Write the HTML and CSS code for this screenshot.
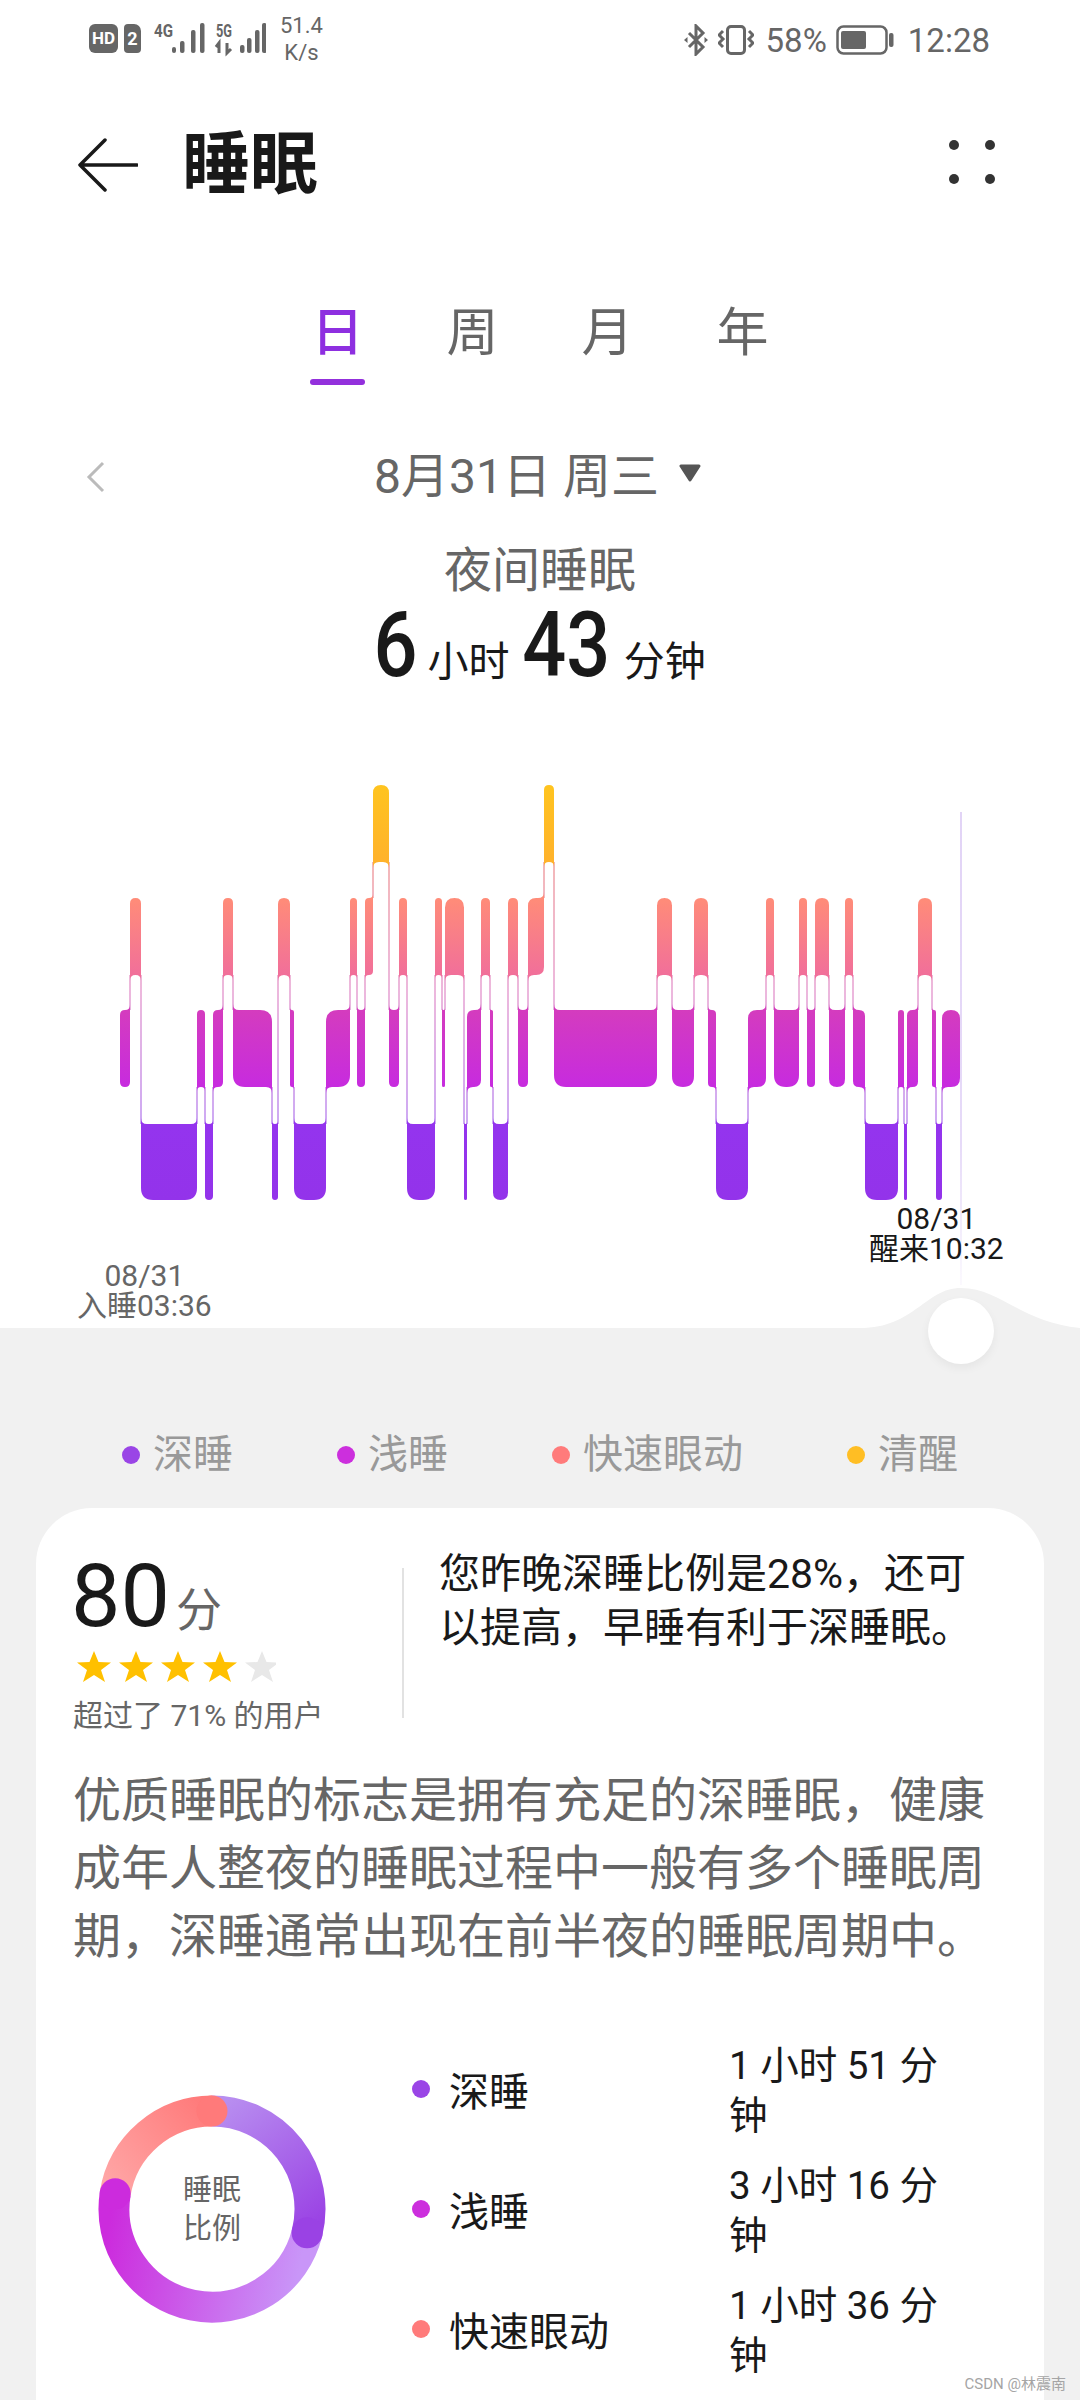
FILE: index.html
```html
<!DOCTYPE html>
<html>
    <head>
        <title>睡眠</title>
        <meta charset="UTF-8">
        <link rel="stylesheet" href="styles.css">
    </head>
    <body>
        <div class="status">
            <div class="status-left">
                <div class="hd">HD</div>
                <div class="sim">2</div>
                <svg class="signal" width="112" height="40" viewBox="154 20 112 40">
                    <text x="154" y="38" class="net" textLength="19" lengthAdjust="spacingAndGlyphs">4G</text>
                    <rect x="172" y="48" width="4" height="6" rx="2"/>
                    <rect x="180" y="42" width="4.500" height="12" rx="2"/>
                    <rect x="191" y="31" width="4.500" height="23" rx="2"/>
                    <rect x="200" y="24" width="4.500" height="30" rx="2"/>
                    <text x="216" y="38" class="net" textLength="16" lengthAdjust="spacingAndGlyphs">5G</text>
                    <path d="M219 54V44l-3 4M227 44v10l4-4" class="arrows"/>
                    <rect x="240" y="46" width="4.500" height="8" rx="2"/>
                    <rect x="247" y="39" width="4.500" height="15" rx="2"/>
                    <rect x="255" y="31" width="4.500" height="23" rx="2"/>
                    <rect x="262" y="24" width="4.500" height="30" rx="2"/>
                </svg>
                <div class="speed">51.4<br>K/s</div>
            </div>
            <div class="status-right">
                <svg class="bt" width="24" height="32" viewBox="0 0 24 32">
                    <path d="M5 9l14 14-7 7V2l7 7L5 23" fill="none" stroke="#666" stroke-width="3"/>
                    <path d="M0 16l3.500-3v6zM24 16l-3.500-3v6z" fill="#666"/>
                </svg>
                <svg class="vib" width="36" height="30" viewBox="0 0 36 30">
                    <rect x="9.500" y="1.500" width="17" height="27" rx="3.500" fill="none" stroke="#666" stroke-width="3"/>
                    <path d="M5 6L1 10l4 4-4 4 4 4M31 6l4 4-4 4 4 4-4 4" fill="none" stroke="#666" stroke-width="3"/>
                </svg>
                <span class="pct">58%</span>
                <svg class="batt" width="58" height="30" viewBox="0 0 58 30">
                    <rect x="1.500" y="1.500" width="49" height="27" rx="6" fill="none" stroke="#666" stroke-width="2.500"/>
                    <rect x="5" y="6" width="25" height="18" rx="2" fill="#666"/>
                    <rect x="53" y="8" width="4.500" height="14" rx="2" fill="#666"/>
                </svg>
                <span class="time">12:28</span>
            </div>
        </div>

        <div class="header">
            <svg class="back" width="60" height="54" viewBox="0 0 60 54">
                <path d="M27 2L2 27l25 25M2 27h57" fill="none" stroke="#191919" stroke-width="3.500" stroke-linecap="round" stroke-linejoin="round"/>
            </svg>
            <div class="title">睡眠</div>
            <div class="more">
                <i></i><i></i><i></i><i></i>
            </div>
        </div>

        <div class="tabs">
            <div class="tab active">日</div>
            <div class="tab">周</div>
            <div class="tab">月</div>
            <div class="tab">年</div>
        </div>

        <div class="date-row">
            <svg width="20" height="32" viewBox="0 0 20 32">
                <path d="M17 2L3 16l14 14" fill="none" stroke="#bbb" stroke-width="3"/>
            </svg>
            <div class="date"><span>8月31日 周三</span><svg class="caret" width="22" height="18" viewBox="0 0 22 18">
                    <path d="M2 2h18l-9 14z" fill="#555" stroke="#555" stroke-width="3" stroke-linejoin="round"/>
                </svg></div>
        </div>

        <div class="sleep-title">夜间睡眠</div>
        <div class="sleep-total">
            <span class="big">6</span><span>小时</span><span class="big">43</span><span>分钟</span>
        </div>

        <div class="chart">
            <svg id="hypnogram" width="1080" height="637" viewBox="0 691 1080 637">
                <defs>
                    <linearGradient id="g0" gradientUnits="userSpaceOnUse" x1="0" y1="785" x2="0" y2="862">
                        <stop offset="0" stop-color="#ffc41f"/><stop offset="1" stop-color="#ffb22b"/>
                    </linearGradient>
                    <linearGradient id="g1" gradientUnits="userSpaceOnUse" x1="0" y1="898" x2="0" y2="975">
                        <stop offset="0" stop-color="#ff8c78"/><stop offset="1" stop-color="#f16f9a"/>
                    </linearGradient>
                    <linearGradient id="g2" gradientUnits="userSpaceOnUse" x1="0" y1="1010" x2="0" y2="1087">
                        <stop offset="0" stop-color="#d43cbe"/><stop offset="1" stop-color="#c72bdf"/>
                    </linearGradient>
                    <linearGradient id="g3" gradientUnits="userSpaceOnUse" x1="0" y1="1124" x2="0" y2="1200">
                        <stop offset="0" stop-color="#9434ee"/><stop offset="1" stop-color="#9333ea"/>
                    </linearGradient>
                    <linearGradient id="link" gradientUnits="userSpaceOnUse" x1="0" y1="860" x2="0" y2="1126">
                        <stop offset="0" stop-color="#f0a0a0"/><stop offset="0.5" stop-color="#e6a0d2"/><stop offset="1" stop-color="#bc8cf0"/>
                    </linearGradient>
                    <linearGradient id="guide" gradientUnits="userSpaceOnUse" x1="0" y1="812" x2="0" y2="1285">
                        <stop offset="0" stop-color="#e2d4f6"/><stop offset="0.7" stop-color="#e6daf8"/><stop offset="1" stop-color="#fbf9fe"/>
                    </linearGradient>
                </defs>
                <rect x="960" y="812" width="2" height="473" fill="url(#guide)"/>
                <g id="segments"></g>
                <path d="M860 1328C915 1328 925 1288 961 1288C1000 1288 1020 1322 1080 1328Z" fill="#f1f1f1"/>
            </svg>
            <div class="stamp stamp-end">08/31<br>醒来10:32</div>
            <div class="stamp stamp-start">08/31<br>入睡03:36</div>
            <div class="knob"></div>
        </div>

        <div class="lower">
            <div class="legend">
                <div class="legend-item"><i class="dot deep"></i>深睡</div>
                <div class="legend-item"><i class="dot light"></i>浅睡</div>
                <div class="legend-item"><i class="dot rem"></i>快速眼动</div>
                <div class="legend-item"><i class="dot awake"></i>清醒</div>
            </div>

            <div class="card">
                <div class="score-row">
                    <div class="score-col">
                        <div class="score"><span class="score-num">80</span><span class="score-unit">分</span></div>
                        <svg class="stars" width="200" height="31" viewBox="0 0 200 31">
                            <polygon id="star" fill="#ffc000" points="18,0 22.500,11 35,11.500 25,19 29,31 18,24 7,31 11,19 1,11.500 13.500,11"/>
                            <use href="#star" x="42"/>
                            <use href="#star" x="84"/>
                            <use href="#star" x="126"/>
                            <polygon transform="translate(168)" fill="#e8e8e8" points="18,0 22.500,11 35,11.500 25,19 29,31 18,24 7,31 11,19 1,11.500 13.500,11"/>
                        </svg>
                        <div class="beat">超过了 71% 的用户</div>
                    </div>
                    <div class="divider"></div>
                    <div class="tip">您昨晚深睡比例是28%，还可以提高，早睡有利于深睡眠。</div>
                </div>

                <p class="desc">优质睡眠的标志是拥有充足的深睡眠，健康成年人整夜的睡眠过程中一般有多个睡眠周期，深睡通常出现在前半夜的睡眠周期中。</p>

                <div class="ratio">
                    <div class="donut">
                        <svg width="230" height="230" viewBox="0 0 230 230">
                            <defs>
                                <linearGradient id="arcDeep" gradientUnits="userSpaceOnUse" x1="115" y1="17" x2="210" y2="139">
                                    <stop offset="0" stop-color="#b88ef0"/><stop offset="1" stop-color="#9a42e4"/>
                                </linearGradient>
                                <linearGradient id="arcLight" gradientUnits="userSpaceOnUse" x1="210" y1="139" x2="18" y2="100">
                                    <stop offset="0" stop-color="#c996f8"/><stop offset="1" stop-color="#cc2bdd"/>
                                </linearGradient>
                                <linearGradient id="arcRem" gradientUnits="userSpaceOnUse" x1="18" y1="100" x2="115" y2="17">
                                    <stop offset="0" stop-color="#ffa6a6"/><stop offset="1" stop-color="#ff7a7a"/>
                                </linearGradient>
                            </defs>
                            <path d="M115 17A98 98 0 0 1 210.100 138.700" fill="none" stroke="url(#arcDeep)" stroke-width="31"/>
                            <path d="M210.100 138.700A98 98 0 0 1 18.200 99.700" fill="none" stroke="url(#arcLight)" stroke-width="31"/>
                            <path d="M18.200 99.700A98 98 0 0 1 115 17" fill="none" stroke="url(#arcRem)" stroke-width="31"/>
                            <circle cx="210.100" cy="138.700" r="15.500" fill="#9a42e4"/>
                            <circle cx="18.200" cy="99.700" r="15.500" fill="#cc2bdd"/>
                            <circle cx="115" cy="17" r="15.500" fill="#ff7a7a"/>
                        </svg>
                        <div class="donut-label">睡眠<br>比例</div>
                    </div>
                    <div class="ratio-list">
                        <div class="ratio-row">
                            <i class="dot deep"></i><span class="ratio-name">深睡</span><span class="ratio-val">1 小时 51 分钟</span>
                        </div>
                        <div class="ratio-row">
                            <i class="dot light"></i><span class="ratio-name">浅睡</span><span class="ratio-val">3 小时 16 分钟</span>
                        </div>
                        <div class="ratio-row">
                            <i class="dot rem"></i><span class="ratio-name">快速眼动</span><span class="ratio-val">1 小时 36 分钟</span>
                        </div>
                    </div>
                </div>
            </div>
        </div>

        <div class="watermark">CSDN @林震南</div>
        <script src="chart.js"></script>
    </body>
</html>
```

FILE: styles.css
```css
html, body {
    margin: 0;
    padding: 0;
}
body {
    position: relative;
    width: 1080px;
    height: 2400px;
    overflow: hidden;
    background-color: #fff;
    color: #191919;
    font-family: Roboto, "Noto Sans CJK SC", sans-serif;
}
svg {
    display: block;
}

/* status bar */
.status {
    height: 78px;
    display: flex;
    justify-content: space-between;
    align-items: center;
    padding: 2px 90px 0 89px;
    box-sizing: border-box;
    color: #666;
}
.status-left, .status-right {
    display: flex;
    align-items: center;
}
.hd {
    width: 29px;
    height: 29px;
    margin-top: -3px;
    border-radius: 6px;
    background: #666;
    color: #fff;
    font-size: 17px;
    font-weight: 700;
    line-height: 29px;
    text-align: center;
}
.sim {
    width: 17px;
    height: 29px;
    margin: -3px 0 0 6px;
    border-radius: 4px 7px 4px 4px;
    background: #666;
    color: #fff;
    font-size: 18px;
    font-weight: 700;
    line-height: 29px;
    text-align: center;
}
.signal {
    margin: -2px 0 0 13px;
}
.signal rect {
    fill: #666;
}
.net {
    fill: #666;
    font-size: 18px;
    font-weight: 700;
}
.arrows {
    fill: none;
    stroke: #666;
    stroke-width: 3;
}
.speed {
    margin: -2px 0 0 14px;
    font-size: 22px;
    line-height: 27px;
    text-align: center;
}
.bt {
    margin-right: 10px;
}
.vib {
    margin-right: 12px;
}
.pct, .time {
    font-size: 33px;
}
.batt {
    margin-left: 9px;
    margin-right: 14px;
}

/* title bar */
.header {
    height: 174px;
    display: flex;
    align-items: center;
    padding: 0 85px 0 78px;
}
.title {
    flex: 1;
    margin-left: 44px;
    font-size: 68px;
    font-weight: 700;
    line-height: 80px;
}
.more {
    width: 46px;
    margin-top: -6px;
    display: grid;
    grid-template-columns: 10px 10px;
    justify-content: space-between;
    row-gap: 24px;
}
.more i {
    width: 10px;
    height: 10px;
    border-radius: 50%;
    background: #333;
}

/* day / week / month / year */
.tabs {
    display: flex;
    justify-content: center;
    margin-top: 47px;
}
.tab {
    position: relative;
    width: 135px;
    height: 86px;
    color: #666;
    font-size: 52px;
    line-height: 70px;
    text-align: center;
}
.tab.active {
    color: #8e2fe0;
    font-weight: 500;
}
.tab.active:after {
    content: "";
    position: absolute;
    left: 40px;
    bottom: 0;
    width: 55px;
    height: 6px;
    border-radius: 3px;
    background: #9330dc;
}

.date-row {
    display: grid;
    grid-template-columns: 1fr auto 1fr;
    align-items: center;
    height: 60px;
    margin-top: 62px;
    padding: 0 91px 0 86px;
}
.date {
    grid-column: 2;
    display: flex;
    align-items: center;
    color: #666;
    font-size: 48px;
    line-height: 60px;
}
.caret {
    margin: -8px 0 0 20px;
}
.sleep-title {
    margin-top: 34px;
    color: #666;
    font-size: 48px;
    line-height: 60px;
    text-align: center;
}
.sleep-total {
    height: 90px;
    display: flex;
    justify-content: center;
    align-items: baseline;
    font-size: 41px;
    line-height: 90px;
    gap: 10px;
}
.big {
    display: inline-block;
    font-size: 90px;
    font-weight: 500;
    transform: scaleX(0.86);
    margin: 0 -4px;
}

/* hypnogram */
.chart {
    position: relative;
    height: 637px;
}
.stamp {
    position: absolute;
    font-size: 30px;
    line-height: 30px;
    text-align: center;
    white-space: nowrap;
}
.stamp-end {
    left: 869px;
    top: 513px;
}
.stamp-start {
    left: 77px;
    top: 570px;
    color: #666;
}
.knob {
    position: absolute;
    left: 928px;
    top: 607px;
    width: 66px;
    height: 66px;
    border-radius: 50%;
    background: #fff;
    box-shadow: 0 4px 10px rgba(0, 0, 0, 0.05);
    z-index: 2;
}

.lower {
    height: 1072px;
    background-color: #f1f1f1;
    padding-top: 97px;
    box-sizing: border-box;
}
.legend {
    display: flex;
    justify-content: center;
    gap: 104px;
    height: 60px;
}
.legend-item {
    display: flex;
    align-items: center;
    color: #999;
    font-size: 40px;
    line-height: 60px;
}
.legend-item .dot {
    margin-right: 13px;
}
.dot {
    flex: none;
    width: 18px;
    height: 18px;
    border-radius: 50%;
}
.dot.deep {
    background: #9a45e6;
}
.dot.light {
    background: #cc2fdd;
}
.dot.rem {
    background: #ff7b7b;
}
.dot.awake {
    background: #ffbe24;
}

/* report card */
.card {
    height: 1000px;
    margin: 23px 36px 0;
    padding: 44px 37px 0;
    border-radius: 56px 56px 0 0;
    background: #fff;
    box-sizing: border-box;
}
.score-row {
    display: flex;
    align-items: flex-start;
}
.score-col {
    width: 329px;
}
.score {
    height: 88px;
    line-height: 88px;
    margin-left: -2px;
    white-space: nowrap;
}
.score-num {
    font-size: 88px;
}
.score-unit {
    margin-left: 6px;
    color: #666;
    font-size: 46px;
}
.stars {
    margin: 11px 0 0 3px;
}
.beat {
    margin-top: 14px;
    color: #666;
    font-size: 30px;
    line-height: 40px;
    white-space: nowrap;
}
.divider {
    width: 2px;
    height: 150px;
    margin-top: 16px;
    background: #e2e2e2;
}
.tip {
    width: 545px;
    margin: -5px 0 0 35px;
    font-size: 41px;
    line-height: 54px;
}
.desc {
    margin: 31px 0 0;
    color: #666;
    font-size: 48px;
    line-height: 68px;
}
.ratio {
    display: grid;
    grid-template-columns: 339px 1fr;
    margin-top: 58px;
}
.donut {
    display: grid;
    align-items: center;
    justify-items: center;
    width: 230px;
    margin-left: 24px;
}
.donut svg, .donut-label {
    grid-area: 1 / 1;
}
.donut-label {
    margin-top: 2px;
    color: #666;
    font-size: 29px;
    line-height: 39px;
    text-align: center;
}
.ratio-row {
    height: 120px;
    display: flex;
    align-items: center;
}
.ratio-name {
    width: 280px;
    margin-left: 19px;
    font-size: 40px;
}
.ratio-val {
    width: 240px;
    margin-top: 3px;
    font-size: 38.500px;
    line-height: 50px;
}

.watermark {
    position: absolute;
    right: 14px;
    bottom: 4px;
    color: #a5a5a5;
    font-size: 15px;
    line-height: 24px;
}
```

FILE: chart.js
```js
// 睡眠分期: level 0 清醒 1 快速眼动 2 浅睡 3 深睡, second value is the right edge
var startX = 120;
var stages = [
    [2, 130], [1, 141], [3, 197], [2, 205], [3, 213], [2, 223], [1, 233], [2, 272],
    [3, 278], [1, 290], [2, 294], [3, 326], [2, 350], [1, 357], [2, 365], [1, 373],
    [0, 389], [2, 399], [1, 407], [3, 435], [1, 442], [2, 445], [1, 464], [3, 467],
    [2, 481], [1, 490], [2, 493], [3, 508], [1, 518], [2, 528], [1, 544], [0, 554],
    [2, 657], [1, 672], [2, 694], [1, 708], [2, 716], [3, 748], [2, 766], [1, 774],
    [2, 799], [1, 807], [2, 815], [1, 829], [2, 845], [1, 853], [2, 865], [3, 898],
    [2, 904], [3, 907], [2, 918], [1, 932], [2, 936], [3, 942], [2, 960]
];
var tops = [785, 898, 1010, 1124];
var bottoms = [862, 975, 1087, 1200];

function segmentPath(x0, x1, level, left, right) {
    var t = tops[level], b = bottoms[level], w = x1 - x0;
    var r = Math.min(12, w / 2), f = Math.min(6, w / 2);
    var d = '';
    // a higher or lower neighbour flares the corner out into the connector
    if (left !== null && left < level) {
        d += 'M' + x0 + ' ' + (t - f) + 'Q' + x0 + ' ' + t + ' ' + (x0 + f) + ' ' + t;
    } else {
        d += 'M' + x0 + ' ' + (t + r) + 'Q' + x0 + ' ' + t + ' ' + (x0 + r) + ' ' + t;
    }
    if (right !== null && right < level) {
        d += 'L' + (x1 - f) + ' ' + t + 'Q' + x1 + ' ' + t + ' ' + x1 + ' ' + (t - f);
    } else {
        d += 'L' + (x1 - r) + ' ' + t + 'Q' + x1 + ' ' + t + ' ' + x1 + ' ' + (t + r);
    }
    if (right !== null && right > level) {
        d += 'L' + x1 + ' ' + (b + f) + 'Q' + x1 + ' ' + b + ' ' + (x1 - f) + ' ' + b;
    } else {
        d += 'L' + x1 + ' ' + (b - r) + 'Q' + x1 + ' ' + b + ' ' + (x1 - r) + ' ' + b;
    }
    if (left !== null && left > level) {
        d += 'L' + (x0 + f) + ' ' + b + 'Q' + x0 + ' ' + b + ' ' + x0 + ' ' + (b + f);
    } else {
        d += 'L' + (x0 + r) + ' ' + b + 'Q' + x0 + ' ' + b + ' ' + x0 + ' ' + (b - r);
    }
    return d + 'Z';
}

var html = '';
var x0 = startX;
for (var i = 0; i < stages.length; i++) {
    var level = stages[i][0], x1 = stages[i][1];
    var left = i > 0 ? stages[i - 1][0] : null;
    var right = i < stages.length - 1 ? stages[i + 1][0] : null;
    if (right !== null) {
        var y0 = bottoms[Math.min(level, right)], y1 = tops[Math.max(level, right)];
        html += '<rect x="' + (x1 - 0.75) + '" y="' + y0 + '" width="1.5" height="' + (y1 - y0) + '" fill="url(#link)"/>';
    }
    html += '<path d="' + segmentPath(x0, x1, level, left, right) + '" fill="url(#g' + level + ')"/>';
    x0 = x1;
}
document.getElementById('segments').innerHTML = html;
```
